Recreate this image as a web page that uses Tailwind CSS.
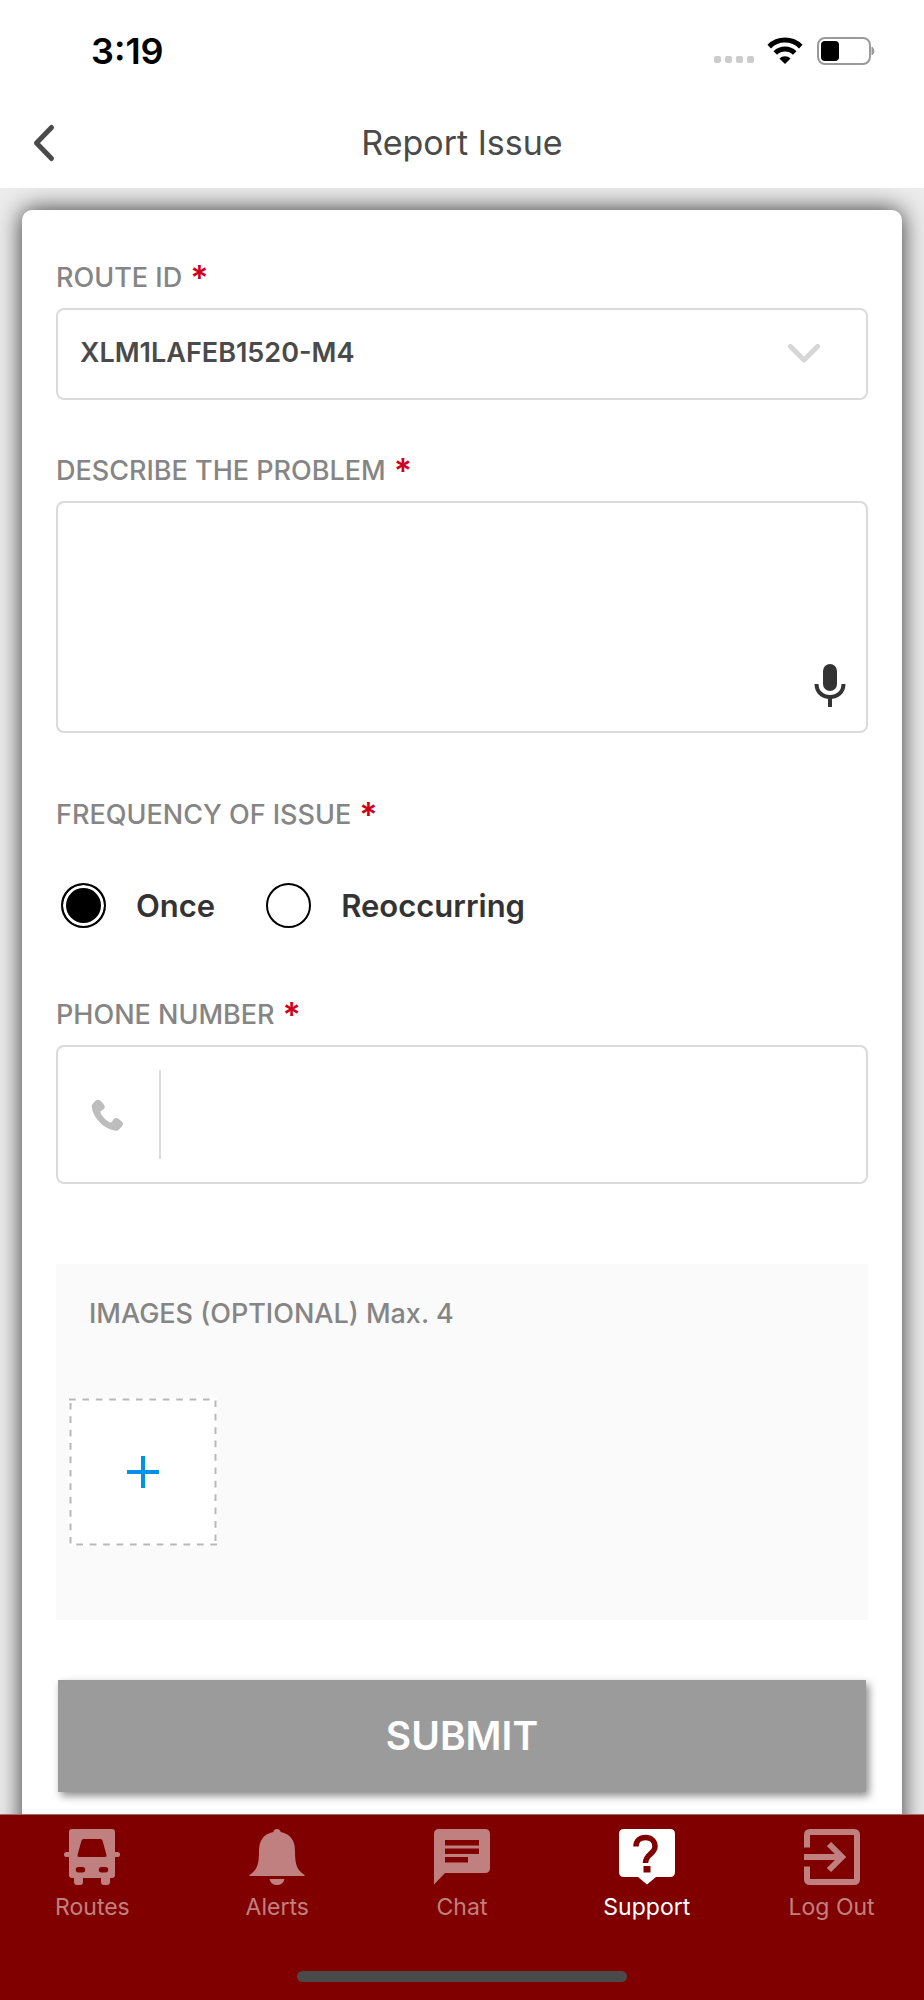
<!DOCTYPE html>
<html lang="en">
<head>
    <meta charset="UTF-8">
    <meta name="viewport" content="width=device-width, initial-scale=1.0">
    <title>Report Issue</title>
    <script src="https://cdn.jsdelivr.net/npm/@tailwindcss/browser@4"></script>
</head>
<body class="min-h-screen flex flex-col bg-white font-['Inter',sans-serif] text-[#4a4a4a]">
    <!-- Status bar -->
    <div class="flex items-center justify-between h-[101px] pl-[91px] pr-12">
        <span class="text-[36px] font-semibold text-black">3:19</span>
        <div class="flex items-center gap-[13px]">
            <div class="flex gap-1 pt-[18px]">
                <span class="size-[7px] rounded-[2px] bg-[#cccccc]"></span>
                <span class="size-[7px] rounded-[2px] bg-[#cccccc]"></span>
                <span class="size-[7px] rounded-[2px] bg-[#cccccc]"></span>
                <span class="size-[7px] rounded-[2px] bg-[#cccccc]"></span>
            </div>
            <svg class="w-9 h-[27px]" viewBox="0 0 36 27" fill="none" stroke="#000" stroke-width="5">
                <path d="M2.2 9.6a22.5 22.5 0 0 1 31.6 0"/>
                <path d="M8.3 16a13.9 13.9 0 0 1 19.4 0"/>
                <path d="M12.4 21.4a8.2 8.2 0 0 1 11.2 0L18 27z" fill="#000" stroke="none"/>
            </svg>
            <svg class="w-[60px] h-7" viewBox="0 0 60 28">
                <rect x="2" y="1" width="52" height="26" rx="7" fill="none" stroke="#9a9a9a" stroke-width="2"/>
                <rect x="5" y="4" width="18" height="20" rx="4" fill="#000"/>
                <path d="M56 10q4 4 0 8z" fill="#9a9a9a" stroke="#9a9a9a"/>
            </svg>
        </div>
    </div>

    <!-- Title bar -->
    <header class="flex items-center h-[87px] px-6 pb-1">
        <button type="button" aria-label="Back" class="flex items-center justify-center size-10">
            <svg class="w-6 h-10" viewBox="0 0 24 40" fill="none" stroke="#4a4a4a" stroke-width="5" stroke-linecap="round" stroke-linejoin="round">
                <path d="M19.5 4.5L4.500 20L19.5 35.5"/>
            </svg>
        </button>
        <h1 class="flex-1 text-center text-[34px] pr-10">Report Issue</h1>
    </header>

    <!-- Form card, runs on under the tab bar -->
    <main class="flex-1 px-[22px] pt-[22px] bg-[#ececec] overflow-hidden">
        <form class="-mb-10 px-[34px] pt-[52px] pb-[62px] bg-white rounded-[10px] shadow-[0_0_24px_rgba(0,0,0,0.8)]">
            <label for="route" class="flex text-[27px] leading-[32px] font-medium text-[#858585]">ROUTE ID<span class="ml-2 text-[34px] font-semibold text-[#d0021b]">*</span></label>
            <div class="relative mt-[14px]">
                <select id="route" class="block w-full h-[92px] pl-[22px] pr-20 pb-[2px] appearance-none border-2 border-[#dadada] rounded-lg text-[27px] font-semibold">
                    <option>XLM1LAFEB1520-M4</option>
                </select>
                <svg class="absolute right-12 top-9 w-8 h-5 pointer-events-none" viewBox="0 0 32 20" fill="none" stroke="#d6d6d6" stroke-width="5" stroke-linecap="round" stroke-linejoin="round">
                    <path d="M2.500 2.500L16 16L29.500 2.500"/>
                </svg>
            </div>

            <label for="problem" class="flex mt-[55px] text-[27px] leading-[32px] font-medium text-[#858585]">DESCRIBE THE PROBLEM<span class="ml-2 text-[34px] font-semibold text-[#d0021b]">*</span></label>
            <div class="relative mt-[14px]">
                <textarea id="problem" class="block w-full h-[232px] p-6 pr-20 resize-none border-2 border-[#dadada] rounded-lg text-[26px]"></textarea>
                <button type="button" aria-label="Dictate" class="absolute right-[22px] bottom-[26px]">
                    <svg class="w-8 h-11" viewBox="0 0 32 44">
                        <rect x="9" y="1" width="14" height="27" rx="7" fill="#333"/>
                        <path d="M2.500 21c0 8 6 13 13.500 13s13.500-5 13.500-13" fill="none" stroke="#333" stroke-width="4"/>
                        <path d="M14 34h4v10h-4z" fill="#333"/>
                    </svg>
                </button>
            </div>

            <fieldset class="mt-[66px]">
                <legend class="flex text-[27px] leading-[32px] font-medium text-[#858585]">FREQUENCY OF ISSUE<span class="ml-2 text-[34px] font-semibold text-[#d0021b]">*</span></legend>
                <div class="flex gap-[51px] mt-[52px] pl-[5px] text-[31px] leading-[45px] font-semibold text-[#333333]">
                    <label class="flex items-center gap-[30px]">
                        <input type="radio" name="frequency" value="once" checked class="size-[45px] appearance-none rounded-full border-2 border-black checked:bg-black checked:shadow-[inset_0_0_0_3px_#fff]">
                        Once
                    </label>
                    <label class="flex items-center gap-[30px]">
                        <input type="radio" name="frequency" value="reoccurring" class="size-[45px] appearance-none rounded-full border-2 border-black checked:bg-black checked:shadow-[inset_0_0_0_3px_#fff]">
                        Reoccurring
                    </label>
                </div>
            </fieldset>

            <label for="phone" class="flex mt-[71px] text-[27px] leading-[32px] font-medium text-[#858585]">PHONE NUMBER<span class="ml-2 text-[34px] font-semibold text-[#d0021b]">*</span></label>
            <div class="flex items-center h-[139px] mt-[14px] border-2 border-[#dadada] rounded-lg">
                <div class="flex items-center justify-center w-[103px] h-[89px] pr-1 border-r-2 border-[#dadada]">
                    <svg class="size-8" viewBox="0 0 32 32" fill="#bdbdbd">
                        <path d="M1.300 5.200L4.500 1.700Q7 -.4 9.500 1.700L12.300 4.800Q15 8 12.800 10L9.500 12.500Q9.200 14 11 16.500Q14 20.700 17.500 22.800Q19.500 24 20.800 23L22.600 20.300Q24.500 18 27.500 19.700L31 22.800Q33 25 30.800 27.600L27.500 31Q26 32.200 23.500 31.600Q14 29.500 8 22.500Q1.500 15.500 .8 8Q.6 6.200 1.300 5.200Z"/>
                    </svg>
                </div>
                <input id="phone" type="tel" class="flex-1 min-w-0 h-full px-6 text-[26px] outline-none">
            </div>

            <section class="h-[356px] mt-20 pt-[25px] bg-[#fafafa]">
                <h2 class="pl-[33px] text-[27px] leading-[50px] font-medium text-[#858585]">IMAGES (OPTIONAL) Max. 4</h2>
                <button type="button" aria-label="Add image" class="block mt-[59px] ml-[13px] bg-white">
                    <svg class="size-[148px]" viewBox="0 0 148 148" fill="none">
                        <path d="M0 1.500H146.500V148" stroke="#b8b8b8" stroke-width="2" stroke-dasharray="6.700 6.700"/>
                        <path d="M148 146.500H1.500V0" stroke="#b8b8b8" stroke-width="2" stroke-dasharray="6.700 6.700"/>
                        <path d="M58 74H90M74 58V90" stroke="#0091ea" stroke-width="4"/>
                    </svg>
                </button>
            </section>

            <div class="mt-[60px] px-[2px]">
                <button type="submit" class="block w-full h-28 bg-[#9b9b9b] text-[39px] font-semibold text-white shadow-[3px_4px_8px_rgba(0,0,0,0.45)]">SUBMIT</button>
            </div>
        </form>
    </main>

    <!-- Tab bar -->
    <footer class="relative border-t border-[#9a6a6a] bg-[#800000] pt-[14px] pb-[18px]">
        <nav class="grid grid-cols-5 text-[23px] leading-[28px] text-[#c08080]">
            <a href="#routes" class="flex flex-col items-center gap-2">
                <svg class="size-14" viewBox="0 0 56 56" fill="currentColor">
                    <path fill-rule="evenodd" d="M8 0H48Q51 0 51 3V23H53.500Q56 23 56 25.500T53.500 28H51V46Q51 49 48 49H46V53Q46 56 43 56H40Q37 56 37 53V49H19V53Q19 56 16 56H13Q10 56 10 53V49H8Q5 49 5 46V28H2.500Q0 28 0 25.500T2.500 23H5V3Q5 0 8 0ZM19.500 10Q18 10 17.500 11.500L13.500 26Q13 28 15 28H41Q43 28 42.500 26L38.500 11.500Q38 10 36.500 10ZM14.500 38a2.500 2.500 0 0 0 0 5.500h4a2.500 2.500 0 0 0 0-5.500ZM37.500 38a2.500 2.500 0 0 0 0 5.500h4a2.500 2.500 0 0 0 0-5.500Z"/>
                </svg>
                Routes
            </a>
            <a href="#alerts" class="flex flex-col items-center gap-2">
                <svg class="size-14" viewBox="0 0 56 56" fill="currentColor">
                    <path d="M28 0Q31 0 31.700 3Q46 6 46 22C46 36 48 41 55.500 46V47H.5V46C8 41 10 36 10 22Q10 6 24.300 3Q25 0 28 0Z"/>
                    <path d="M20.500 50H35.500Q34 56 28 56T20.500 50Z"/>
                </svg>
                Alerts
            </a>
            <a href="#chat" class="flex flex-col items-center gap-2">
                <svg class="size-14" viewBox="0 0 56 56" fill="currentColor">
                    <path fill-rule="evenodd" d="M5 0H51Q56 0 56 5V39Q56 44 51 44H11L0 55.500V5Q0 0 5 0ZM11 11V16.500H45V11ZM11 19.500V25H45V19.500ZM11 28V33.500H34V28Z"/>
                </svg>
                Chat
            </a>
            <a href="#support" aria-current="page" class="flex flex-col items-center gap-2 text-white">
                <svg class="size-14" viewBox="0 0 56 56">
                    <path d="M5 0H51Q56 0 56 5V43Q56 48 51 48H37L28 55.500L19 48H5Q0 48 0 43V5Q0 0 5 0Z" fill="#fff"/>
                    <path d="M17 17.500C17 11.500 21 8.500 26.500 8.500S36 12 36 17.500C36 25 26.500 25 26.500 34" fill="none" stroke="#800000" stroke-width="5.500"/>
                    <path d="M24.500 37H31.500V43.500H24.500Z" fill="#800000"/>
                </svg>
                Support
            </a>
            <a href="#logout" class="flex flex-col items-center gap-2">
                <svg class="size-14" viewBox="0 0 56 56" fill="none" stroke="currentColor" stroke-width="6">
                    <path d="M3 18.500V6Q3 3 6 3H50Q53 3 53 6V50Q53 53 50 53H6Q3 53 3 50V37.500"/>
                    <path d="M0 28H37M25 15L38 28L25 41"/>
                </svg>
                Log Out
            </a>
        </nav>
        <div class="w-[330px] h-[11px] mt-[50px] mx-auto rounded-full bg-[#4a4a4a]"></div>
    </footer>
</body>
</html>
